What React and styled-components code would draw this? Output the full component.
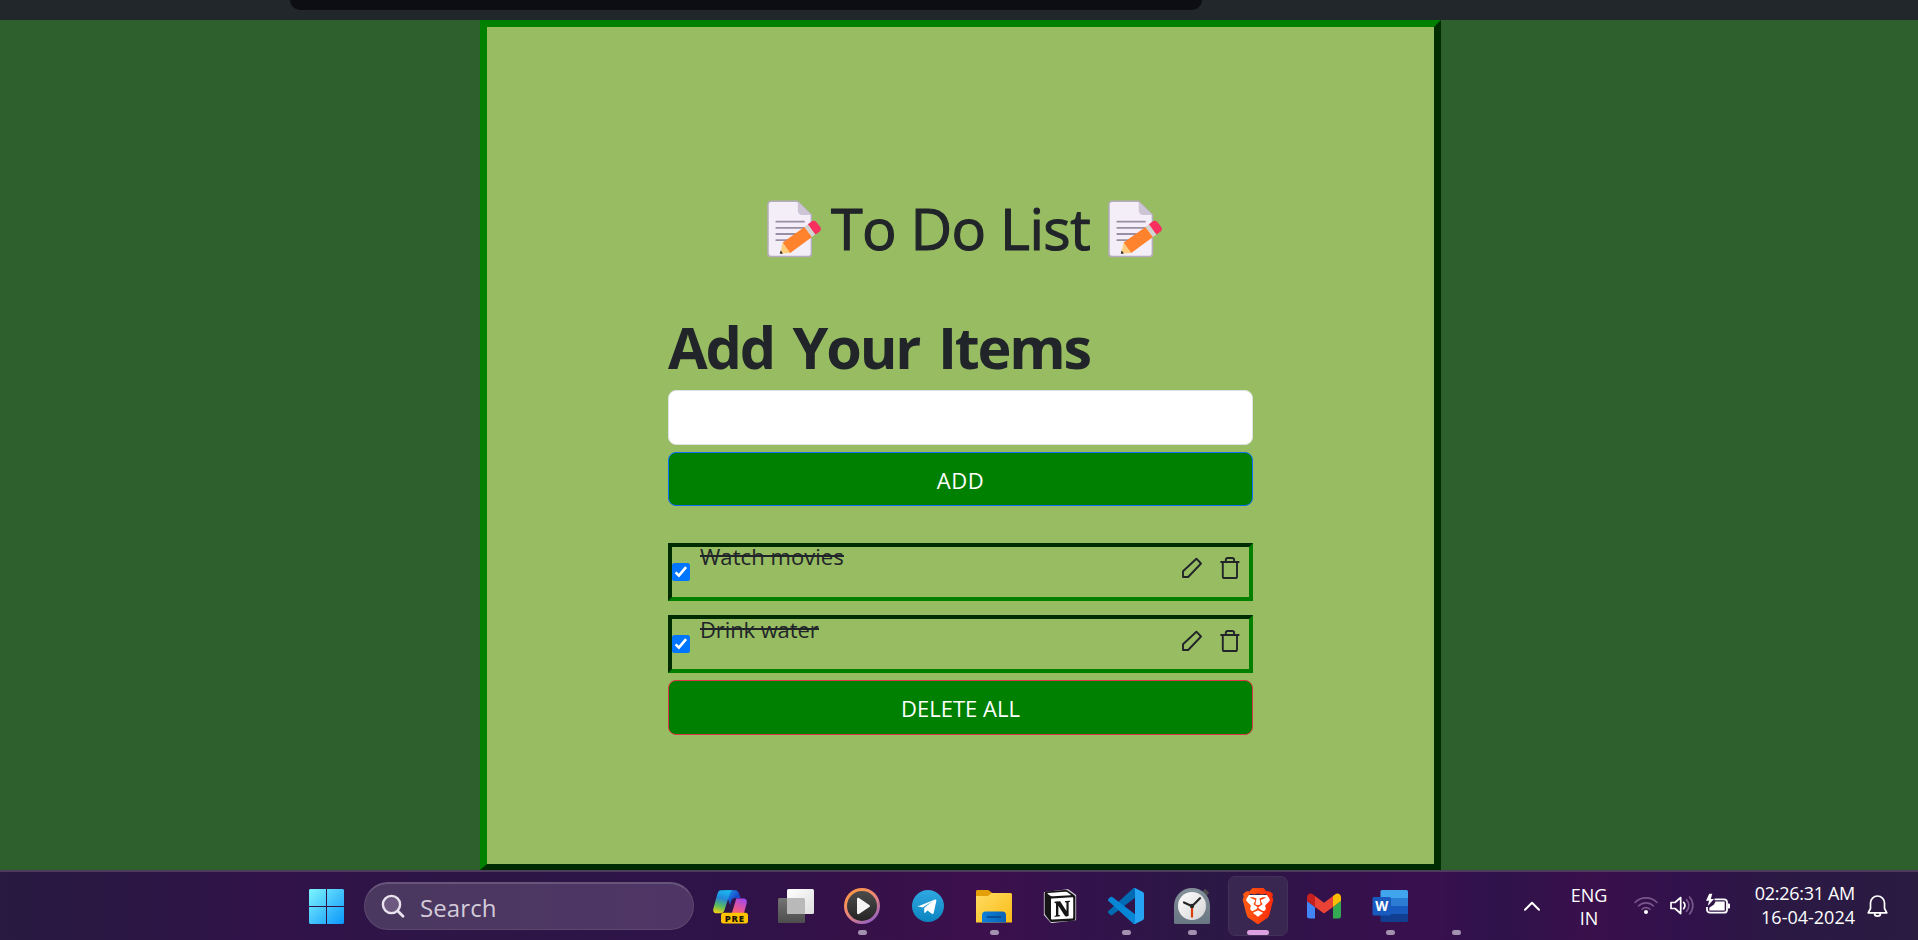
import React, { useState } from 'react';
import styled, { createGlobalStyle } from 'styled-components';
import { SiBrave, SiNotion } from 'react-icons/si';

const GlobalStyle = createGlobalStyle`
  * { box-sizing: border-box; }
  body {
    margin: 0;
    overflow: hidden;
    background: #2d602d;
    font-family: "Open Sans", "Noto Sans", sans-serif;
    color: #212529;
  }
`;

const Screen = styled.div`
  display: flex;
  flex-direction: column;
  height: 940px;
`;

/* ---------- browser edge ---------- */

const BrowserBar = styled.header`
  height: 20px;
  flex: none;
  padding-left: 290px;
  background: #22272b;
`;

const AddressBar = styled.div`
  width: 912px;
  height: 10px;
  border-radius: 0 0 14px 14px;
  background: #0d0e13;
`;

/* ---------- to-do page ---------- */

const Page = styled.main`
  flex: 1;
  display: flex;
  padding-left: 480px;
`;

const Card = styled.section`
  width: 961px;
  border: 7px outset green;
  border-bottom-width: 6px;
  padding: 166px 181px 0;
  background: #98bc62;
`;

const TitleRow = styled.div`
  display: flex;
  align-items: flex-start;
  height: 70px;
  padding-left: 99px;
  svg { flex: none; margin-top: 7px; }
`;

const Title = styled.h1`
  margin: 0 0 0 8px;
  width: 277px;
  font-size: 57.5px;
  font-weight: 500;
  line-height: 70px;
  letter-spacing: -0.58px;
  white-space: nowrap;
  -webkit-text-stroke: 1.1px #212529;
`;

const Heading = styled.h2`
  margin: 49px 0 8px;
  font-size: 57.5px;
  font-weight: 700;
  line-height: 70px;
  letter-spacing: -2.2px;
  word-spacing: 6px;
  white-space: nowrap;
`;

const TextInput = styled.input`
  display: block;
  width: 585px;
  height: 55px;
  border: 1px solid #dee2e6;
  border-radius: 8px;
  background: #fff;
  font: 22px "Open Sans", sans-serif;
  padding: 0 14px;
  outline: none;
`;

const WideButton = styled.button`
  display: block;
  width: 585px;
  height: ${(p) => p.$height}px;
  margin-top: 7px;
  padding: ${(p) => p.$sink}px 0 0;
  border: 1px solid ${(p) => p.$edge};
  border-radius: 8px;
  background: green;
  color: #fff;
  font: 22px "Open Sans", sans-serif;
  letter-spacing: ${(p) => p.$track}px;
`;

const Items = styled.ul`
  list-style: none;
  margin: 37px 0 0;
  padding: 0;
  display: flex;
  flex-direction: column;
  gap: 14px;
`;

const Item = styled.li`
  display: flex;
  align-items: flex-start;
  width: 585px;
  height: 58px;
  border: 4px inset green;
  padding-right: 9px;
`;

const Check = styled.input`
  appearance: none;
  flex: none;
  width: 17.5px;
  height: 17.5px;
  margin: 16px 0 0;
  border-radius: 2.5px;
  border: 1px solid #767676;
  background: #fff;
  &:checked {
    border: 0;
    background: #0075ff url("data:image/svg+xml,%3Csvg xmlns='http://www.w3.org/2000/svg' viewBox='0 0 18 18'%3E%3Cpath d='M3.6 9.4l3.3 3.3 7.2-8.6' fill='none' stroke='white' stroke-width='2.6'/%3E%3C/svg%3E");
  }
`;

const ItemText = styled.span`
  position: relative;
  margin: ${(p) => p.$drop}px auto 0 10.5px;
  font-size: 22px;
  line-height: 19px;
  letter-spacing: ${(p) => p.$track}px;
  white-space: nowrap;
  &::after {
    content: "";
    position: absolute;
    left: 0;
    right: 0;
    top: 8px;
    height: 2px;
    background: #212529;
  }
`;

const ItemActions = styled.span`
  display: flex;
  gap: 18px;
  padding-top: ${(p) => 10 + p.$drop}px;
`;

function Memo() {
  return (
    <svg width="56" height="58" viewBox="0 0 56 58">
      <path d="M4 1.3h26.5L44.4 15v38.5a3 3 0 0 1-3 3H4a3 3 0 0 1-3-3V4.3a3 3 0 0 1 3-3z" fill="#f3eef8" stroke="#b4acbc" strokeWidth="1.5" />
      <path d="M30.8 1.6L44.6 15H35a4.2 4.2 0 0 1-4.2-4.2z" fill="#cdc4d6" />
      <path d="M9.3 21.7H37M9.3 27.8H37M9.3 34H32M9.3 40.2H25" stroke="#998ea4" strokeWidth="1.8" strokeLinecap="round" />
      <path d="M15.7 42.5L23.2 53l-10 .5z" fill="#ffce7c" />
      <path d="M13.7 50.6l2.2 2.8-3.1.4z" fill="#212121" />
      <path d="M15.7 42.5L37.5 27 45 37 23.2 53z" fill="#ff822d" />
      <path d="M37.5 27l3.4-2.7 7.6 10.2L45 37z" fill="#d3d3d3" />
      <path d="M40.9 24.3l3.6-2.7c1.6-1.2 3.4-1.2 4.8.5l4 5c1.2 1.6.7 3.2-.6 4.3l-4.2 3.1z" fill="#f92f60" />
    </svg>
  );
}

function PencilIcon() {
  return (
    <svg width="20" height="22" viewBox="0 0 20 22" fill="none" stroke="#212529" strokeWidth="1.9" strokeLinejoin="round">
      <path d="M1 20v-5.800L14.400 1.700l4.600 4.800L6.200 20z" />
    </svg>
  );
}

function TrashIcon() {
  return (
    <svg width="20" height="22" viewBox="0 0 20 22" fill="none" stroke="#212529" strokeWidth="1.9">
      <path d="M.4 5h19M5.800 4.600V2.900c0-1.200.6-1.900 1.800-1.900h4.600c1.200 0 1.900.7 1.900 1.900v1.700M2.800 5v14.400c0 1 .6 1.600 1.600 1.600h11c1 0 1.600-.6 1.600-1.600V5" />
    </svg>
  );
}

/* ---------- taskbar ---------- */

const Taskbar = styled.footer`
  display: flex;
  flex: none;
  height: 70px;
  border-top: 2px solid #4c3b5c;
  background: linear-gradient(90deg, #281a40 0, #2d1646 180px, #301249 270px, #2d1646 480px, #2e1349 720px, #361148 860px, #3c104d 980px, #32134b 1100px, #2b1845 1210px, #33114a 1320px, #39104e 1430px, #2e124a 1500px, #3a104b 1590px, #31114b 1680px, #2b1944 1780px, #2a1b41 1918px);
`;

const StartButton = styled.div`
  width: 364px;
  padding: 17px 0 0 309px;
`;

const SearchBox = styled.div`
  display: flex;
  align-items: center;
  width: 330px;
  height: 48px;
  margin-top: 10px;
  padding: 1px 0 0 16px;
  border: 1px solid #5d496f;
  border-top: 2px solid #68557a;
  border-radius: 24px;
  background: linear-gradient(90deg, #4a385f, #4f3566);
  color: #d3cbd9;
  font-size: 24px;
  letter-spacing: 0.1px;
  svg { margin-right: 15px; margin-top: -3px; }
`;

const Apps = styled.div`
  display: flex;
  margin-left: 3px;
`;

const AppCell = styled.div`
  width: 66px;
  display: flex;
  justify-content: center;
`;

const AppTile = styled.div`
  display: flex;
  flex-direction: column;
  align-items: center;
  width: 60px;
  height: 60px;
  margin-top: 4px;
  padding-top: ${(p) => (p.$active ? 11 : 12)}px;
  border-radius: 7px;
  ${(p) => p.$active && 'border: 1px solid #43315a; background: #3a2751;'}
  svg { display: block; }
`;

const IconSlot = styled.div`
  display: flex;
  align-items: center;
  justify-content: center;
  width: 36px;
  height: 36px;
`;

const Indicator = styled.div`
  width: ${(p) => (p.$active ? 22 : 9)}px;
  height: 5px;
  margin-top: 6px;
  border-radius: 3px;
  background: ${(p) => (p.$active ? '#dd9fe2' : '#a491b0')};
`;

const Tray = styled.div`
  display: flex;
  align-items: flex-start;
  margin-left: 35px;
  color: #fff;
  font-size: 18px;
  svg { flex: none; }
`;

const Language = styled.div`
  width: 50px;
  margin: 12px 0 0 24px;
  line-height: 23px;
  text-align: center;
`;

const TrayIcons = styled.div`
  display: flex;
  gap: 12px;
  margin: 20px 0 0 20px;
`;

const Clock = styled.div`
  width: 120px;
  margin: 9px 0 0 4px;
  line-height: 24px;
  text-align: right;
  white-space: nowrap;
`;

const ClockTime = styled.div`letter-spacing: -0.3px;`;

const Bell = styled.div`margin: 22px 0 0 12px;`;

const WindowsLogo = () => (
  <svg width="35" height="35" viewBox="0 0 35 35">
    <defs>
      <linearGradient id="win" gradientUnits="userSpaceOnUse" x1="0" y1="0" x2="35" y2="35">
        <stop offset="0" stopColor="#7df6ff" /><stop offset=".5" stopColor="#45c4fc" /><stop offset="1" stopColor="#0a98fb" />
      </linearGradient>
    </defs>
    <path fill="url(#win)" d="M1 0h16v17H0V1zM18 0h16l1 1v16H18zM0 18h17v17H1l-1-1zM18 18h17v16l-1 1H18z" />
  </svg>
);

const SearchGlyph = () => (
  <svg width="24" height="24" viewBox="0 0 24 24" fill="none" stroke="#e9e3ef" strokeWidth="2.4" strokeLinecap="round">
    <circle cx="10.5" cy="10.5" r="8.6" fill="#6d597f" /><path d="M16.800 17l5.200 5.200" strokeWidth="2.800" />
  </svg>
);

const Copilot = () => (
  <svg width="36" height="36" viewBox="0 0 36 36">
    <defs>
      <linearGradient id="cpa" x1=".5" y1="0" x2=".3" y2="1"><stop offset="0" stopColor="#18b8ef" /><stop offset=".35" stopColor="#2486d8" /><stop offset=".7" stopColor="#5dbb5d" /><stop offset="1" stopColor="#f1cf12" /></linearGradient>
      <linearGradient id="cpb" x1=".8" y1="0" x2=".3" y2="1"><stop offset="0" stopColor="#a148ed" /><stop offset=".5" stopColor="#e3559c" /><stop offset="1" stopColor="#ff6b4f" /></linearGradient>
      <linearGradient id="cpc" x1="0" y1="0" x2="1" y2="1"><stop offset="0" stopColor="#1ea5ef" /><stop offset=".6" stopColor="#174acb" /><stop offset="1" stopColor="#2358df" /></linearGradient>
    </defs>
    <path d="M13 2.2h10c2.2 0 3.2 1.2 4 3.4L28.500 10h-5c-2.500 0-3.800 1.200-4.500 3.500L18 17z" fill="url(#cpc)" />
    <path d="M9 2.200h12c-2 .5-2.800 2-3.400 4L12.500 22c-.7 2.200-1.800 3.300-4 3.300H4.700C1.600 25.300.7 23 1.500 20L5.200 6.500C6 3.600 7 2.200 9 2.200z" fill="url(#cpa)" />
    <path d="M24 10.500h7.300c3.300 0 4.100 2.300 3.300 5.300l-2.700 9.400c-.7 2.400-1.600 4-4 4H16c2.400-.4 3.200-2 3.800-4l3.700-12c.3-1.100.5-2 .5-2.700z" fill="url(#cpb)" />
    <rect x="9" y="24.700" width="27" height="10.800" rx="2.500" fill="#ffc400" />
    <text x="22.700" y="33.500" textAnchor="middle" fontFamily="Open Sans, sans-serif" fontWeight="800" fontSize="9.500" letterSpacing=".8" fill="#201608">PRE</text>
  </svg>
);

const TaskView = () => (
  <svg width="36" height="36" viewBox="0 0 36 36">
    <defs><linearGradient id="tva" x1="0" y1="0" x2="1" y2="1"><stop offset="0" stopColor="#fff" /><stop offset="1" stopColor="#dedede" /></linearGradient>
      <linearGradient id="tvb" x1="0" y1="0" x2="0" y2="1"><stop offset="0" stopColor="#747474" /><stop offset="1" stopColor="#4d4d4d" /></linearGradient></defs>
    <rect x="0" y="10" width="27" height="25" rx="1.500" fill="url(#tvb)" />
    <rect x="9" y="1" width="27" height="25" rx="1.500" fill="url(#tva)" />
    <path d="M9 10h16.500q1.500 0 1.500 1.500V26H10.500Q9 26 9 24.500z" fill="#b9b9b9" />
  </svg>
);

const MediaPlayer = () => (
  <svg width="36" height="36" viewBox="0 0 36 36">
    <defs><linearGradient id="mp" x1=".1" y1="0" x2=".8" y2="1"><stop offset="0" stopColor="#ff9a3c" /><stop offset=".5" stopColor="#ed8878" /><stop offset="1" stopColor="#8a5cc9" /></linearGradient>
      <linearGradient id="mpi" x1="0" y1="0" x2="0" y2="1"><stop offset="0" stopColor="#4b4b4b" /><stop offset="1" stopColor="#252525" /></linearGradient></defs>
    <circle cx="18" cy="18" r="18" fill="url(#mp)" /><circle cx="18" cy="18" r="15" fill="url(#mpi)" />
    <path d="M13 11.200v13.600c0 1.300 1 1.800 2 1.100l10.300-6.800c.9-.6.900-1.600 0-2.200L15 10.100c-1-.7-2-.2-2 1.100z" fill="#f4f4f4" />
  </svg>
);

const Telegram = () => (
  <svg width="32" height="32" viewBox="0 0 32 32">
    <defs><linearGradient id="tg" x1="0" y1="0" x2="0" y2="1"><stop offset="0" stopColor="#2fa8e2" /><stop offset="1" stopColor="#0b84c0" /></linearGradient></defs>
    <circle cx="16" cy="16" r="16" fill="url(#tg)" />
    <path d="M6.300 16.300L23 9.600c.9-.3 1.500.2 1.300 1.300L21.700 23c-.2 1-1 1.300-1.800.7l-4.400-3.200-2.300 2.200c-.5.400-1 .300-1-.5v-4.300l8.200-6.600-9.700 6.200-4.300-1c-.9-.3-.9-.9-.1-1.200z" fill="#fff" />
  </svg>
);

const Explorer = () => (
  <svg width="36" height="34" viewBox="0 0 36 34">
    <defs><linearGradient id="fe" x1="0" y1="0" x2="1" y2="1"><stop offset="0" stopColor="#ffdc63" /><stop offset="1" stopColor="#f9bb14" /></linearGradient>
      <linearGradient id="feb" x1="0" y1="0" x2="1" y2="0"><stop offset="0" stopColor="#0f7fd9" /><stop offset="1" stopColor="#0863b6" /></linearGradient></defs>
    <path d="M1.500 1H12c1.500 0 2.400 2.600 4 2.600V9H0V2.500C0 1.600.6 1 1.500 1z" fill="#e3a008" />
    <path d="M0 7h11.500c2 0 2.600-3 4.800-3H34.500A1.500 1.500 0 0 1 36 5.500V33.500H0z" fill="url(#fe)" />
    <path d="M6 33.500V26c0-2.200 1.300-3.500 3.500-3.500h17c2.200 0 3.500 1.300 3.500 3.500v7.500z" fill="url(#feb)" />
    <path d="M11.500 28h13" stroke="#064483" strokeWidth="1.600" strokeLinecap="round" />
  </svg>
);

const StackedMark = styled.div`
  display: grid;
  place-items: center;
  > * { grid-area: 1 / 1; }
`;

const Notion = () => (
  <StackedMark>
    <svg width="34" height="34" viewBox="0 0 24 24"><path d="M1.100 2.600L17.500.6 22.900 4.500v17L6 23.600 1.100 18.200z" fill="#fff" stroke="#d5cfd9" strokeWidth="1" strokeLinejoin="round" /></svg>
    <SiNotion size={32} color="#151515" />
  </StackedMark>
);

const VSCode = () => (
  <svg width="36" height="36" viewBox="0 0 100 100">
    <path d="M96.460 10.800L75.860.88a6.200 6.200 0 0 0-7.100 1.200L1.300 63.600a4.200 4.200 0 0 0 0 6.200l5.500 5a4.200 4.200 0 0 0 5.300.24L93.400 13.400A4.140 4.140 0 0 1 100 16.700v-.24a6.250 6.250 0 0 0-3.540-5.640z" fill="#006bb3" />
    <path d="M96.460 89.200l-20.600 9.900a6.200 6.200 0 0 1-7.100-1.200L1.300 36.400a4.200 4.200 0 0 1 0-6.200l5.500-5a4.200 4.200 0 0 1 5.300-.24L93.400 86.600A4.140 4.140 0 0 0 100 83.300v.24a6.250 6.250 0 0 1-3.540 5.640z" fill="#0587d6" />
    <path d="M75.860 99.100a6.200 6.200 0 0 1-7.100-1.200c2.300 2.300 6.250.7 6.250-2.600V4.670c0-3.300-4-4.900-6.250-2.600a6.200 6.200 0 0 1 7.100-1.200l20.600 9.900A6.250 6.250 0 0 1 100 16.400v67.200a6.250 6.250 0 0 1-3.540 5.630z" fill="#27a3f3" />
  </svg>
);

const ClockApp = () => (
  <svg width="36" height="36" viewBox="0 0 36 36">
    <defs><linearGradient id="ck" x1="0" y1="0" x2="0" y2="1"><stop offset="0" stopColor="#84909a" /><stop offset="1" stopColor="#697783" /></linearGradient>
      <linearGradient id="ckf" x1="0" y1="0" x2="1" y2="1"><stop offset="0" stopColor="#fff" /><stop offset="1" stopColor="#d3d3d5" /></linearGradient></defs>
    <path d="M28.500 3.500l2.500-2.700 4.300 4-2.600 3z" fill="#4b4950" />
    <path d="M0 18a18 18 0 0 1 36 0v16.500a1.500 1.500 0 0 1-1.500 1.500h-33A1.500 1.500 0 0 1 0 34.500z" fill="url(#ck)" />
    <circle cx="18" cy="18" r="14" fill="url(#ckf)" />
    <path d="M18 18v11.500" stroke="#dc3c0e" strokeWidth="2.200" />
    <path d="M10 14.500l8 3.700 8-8" stroke="#262626" strokeWidth="2.200" fill="none" strokeLinecap="round" /><circle cx="18" cy="18" r="2.200" fill="#262626" />
  </svg>
);

const BraveMark = styled(StackedMark)`
  .lion { width: 36px; height: 36px; fill: url(#brave); color: #fb4310; }
`;

const Brave = () => (
  <BraveMark>
    <svg width="36" height="36" viewBox="0 0 36 36">
      <defs><linearGradient id="brave" x1="0" y1="0" x2="1" y2="0"><stop offset="0" stopColor="#ff5c14" /><stop offset="1" stopColor="#fb2a08" /></linearGradient></defs>
      <path d="M8 7h20l3 5-4 16-9 5-9-5-4-16z" fill="#fff" />
    </svg>
    <SiBrave className="lion" />
  </BraveMark>
);

const Gmail = () => (
  <svg width="34" height="26" viewBox="0 0 34 26">
    <path d="M0 8l8 6v11.500H2.300A2.300 2.300 0 0 1 0 23.200z" fill="#4285f4" />
    <path d="M34 8l-8 6v11.500h5.700a2.300 2.300 0 0 0 2.300-2.300z" fill="#34a853" />
    <path d="M26 3l2-1.600c2.600-1.900 6-.2 6 3.100V8l-8 6z" fill="#fbbc04" />
    <path d="M8 14V3l9 6.700L26 3v11l-9 6.500z" fill="#ea4335" />
    <path d="M0 4.500C0 1.200 3.400-.5 6 1.400L8 3v11L0 8z" fill="#c5221f" />
  </svg>
);

const Word = () => (
  <svg width="36" height="34" viewBox="0 0 36 34">
    <path d="M10 1h24.500A1.500 1.500 0 0 1 36 2.500V9H8.500V2.500A1.500 1.500 0 0 1 10 1z" fill="#41a5ee" />
    <path d="M8.500 9H36v8H8.500z" fill="#2b7cd3" /><path d="M8.500 17H36v8H8.500z" fill="#185abd" />
    <path d="M8.500 25H36v6.500a1.500 1.500 0 0 1-1.500 1.500H10a1.500 1.500 0 0 1-1.500-1.500z" fill="#103f91" />
    <rect x=".5" y="8" width="18.500" height="18.500" rx="1.600" fill="#185abd" />
    <text x="9.700" y="22" textAnchor="middle" fontFamily="Open Sans, sans-serif" fontWeight="700" fontSize="13.500" fill="#fff">W</text>
  </svg>
);

const APPS = [
  { name: 'copilot', Icon: Copilot },
  { name: 'taskview', Icon: TaskView },
  { name: 'media', Icon: MediaPlayer, running: true },
  { name: 'telegram', Icon: Telegram },
  { name: 'explorer', Icon: Explorer, running: true },
  { name: 'notion', Icon: Notion },
  { name: 'vscode', Icon: VSCode, running: true },
  { name: 'clock', Icon: ClockApp, running: true },
  { name: 'brave', Icon: Brave, running: true, active: true },
  { name: 'gmail', Icon: Gmail },
  { name: 'word', Icon: Word, running: true },
  { name: 'blank', running: true },
];

const Chevron = styled.svg`margin: 29px 0 0 0;`;

const TODOS = [
  { text: 'Watch movies', drop: 0, track: 0.06 },
  { text: 'Drink water', drop: 1, track: -0.1 },
];

export default function App() {
  const [done, setDone] = useState([true, true]);
  const toggle = (i) => setDone(done.map((d, k) => (k === i ? !d : d)));
  return (
    <Screen>
      <GlobalStyle />
      <BrowserBar><AddressBar /></BrowserBar>
      <Page>
        <Card>
          <TitleRow><Memo /><Title>To Do List</Title><Memo /></TitleRow>
          <Heading>Add Your Items</Heading>
          <TextInput />
          <WideButton $edge="#0d6efd" $height={54} $sink={2} $track={0.6}>ADD</WideButton>
          <Items>
            {TODOS.map((t, i) => (
              <Item key={t.text}>
                <Check type="checkbox" checked={done[i]} onChange={() => toggle(i)} />
                <ItemText $drop={t.drop} $track={t.track}>{t.text}</ItemText>
                <ItemActions $drop={t.drop}><PencilIcon /><TrashIcon /></ItemActions>
              </Item>
            ))}
          </Items>
          <WideButton $edge="#dc3545" $height={55} $sink={0} $track={0}>DELETE ALL</WideButton>
        </Card>
      </Page>
      <Taskbar>
        <StartButton><WindowsLogo /></StartButton>
        <SearchBox><SearchGlyph />Search</SearchBox>
        <Apps>
          {APPS.map(({ name, Icon, running, active }) => (
            <AppCell key={name}>
              <AppTile $active={active}>
                <IconSlot>{Icon && <Icon />}</IconSlot>
                {running && <Indicator $active={active} />}
              </AppTile>
            </AppCell>
          ))}
        </Apps>
        <Tray>
          <Chevron width="16" height="10" viewBox="0 0 16 10" fill="none" stroke="#fff" strokeWidth="2" strokeLinecap="round" strokeLinejoin="round"><path d="M1 8.800l7-7 7 7" /></Chevron>
          <Language>ENG<br />IN</Language>
          <TrayIcons>
            <svg width="24" height="24" viewBox="0 0 24 24" fill="none" stroke="#79578a" strokeWidth="1.600" strokeLinecap="round">
              <path d="M1 10.500a15.500 15.500 0 0 1 22 0M4.500 14a10.600 10.600 0 0 1 15 0M8 17.300a5.700 5.700 0 0 1 8 0" />
              <circle cx="12" cy="20" r="2" fill="#fff" stroke="none" />
            </svg>
            <svg width="24" height="24" viewBox="0 0 24 24" fill="none" stroke="#fff" strokeWidth="1.700" strokeLinecap="round" strokeLinejoin="round">
              <path d="M1 10.500v6h4l5.700 5V5.500L5 10.500zM13.600 10.300a5 5 0 0 1 0 6.400" />
              <path d="M16.500 7.600a8.500 8.500 0 0 1 0 11.800M19.500 5a12.500 12.500 0 0 1 0 17" stroke="#79578a" />
            </svg>
            <svg width="25" height="24" viewBox="0 0 25 24">
              <path d="M8.500 7.300H18a3 3 0 0 1 3 3v7.400a3 3 0 0 1-3 3H4a3 3 0 0 1-3-3V15" fill="none" stroke="#fff" strokeWidth="1.800" />
              <path d="M9.500 9.500h9.200v9H3.300v-2.700L8 12.500zM22 11.500h1q1 0 1 1v3q0 1-1 1h-1z" fill="#fff" />
              <path d="M3.200 1.800L0 8.800h3L1.800 14 8 7H4.800l1.500-5.200z" fill="#fff" />
            </svg>
          </TrayIcons>
          <Clock><ClockTime>02:26:31 AM</ClockTime>16-04-2024</Clock>
          <Bell>
            <svg width="21" height="24" viewBox="0 0 21 24" fill="none" stroke="#fff" strokeWidth="1.700" strokeLinejoin="round">
              <path d="M10.500 2A7 7 0 0 0 3.500 9v5.500L1.200 18.800h18.600l-2.300-4.300V9a7 7 0 0 0-7-7zM7.500 19.200a3 3 0 0 0 6 0" />
            </svg>
          </Bell>
        </Tray>
      </Taskbar>
    </Screen>
  );
}
